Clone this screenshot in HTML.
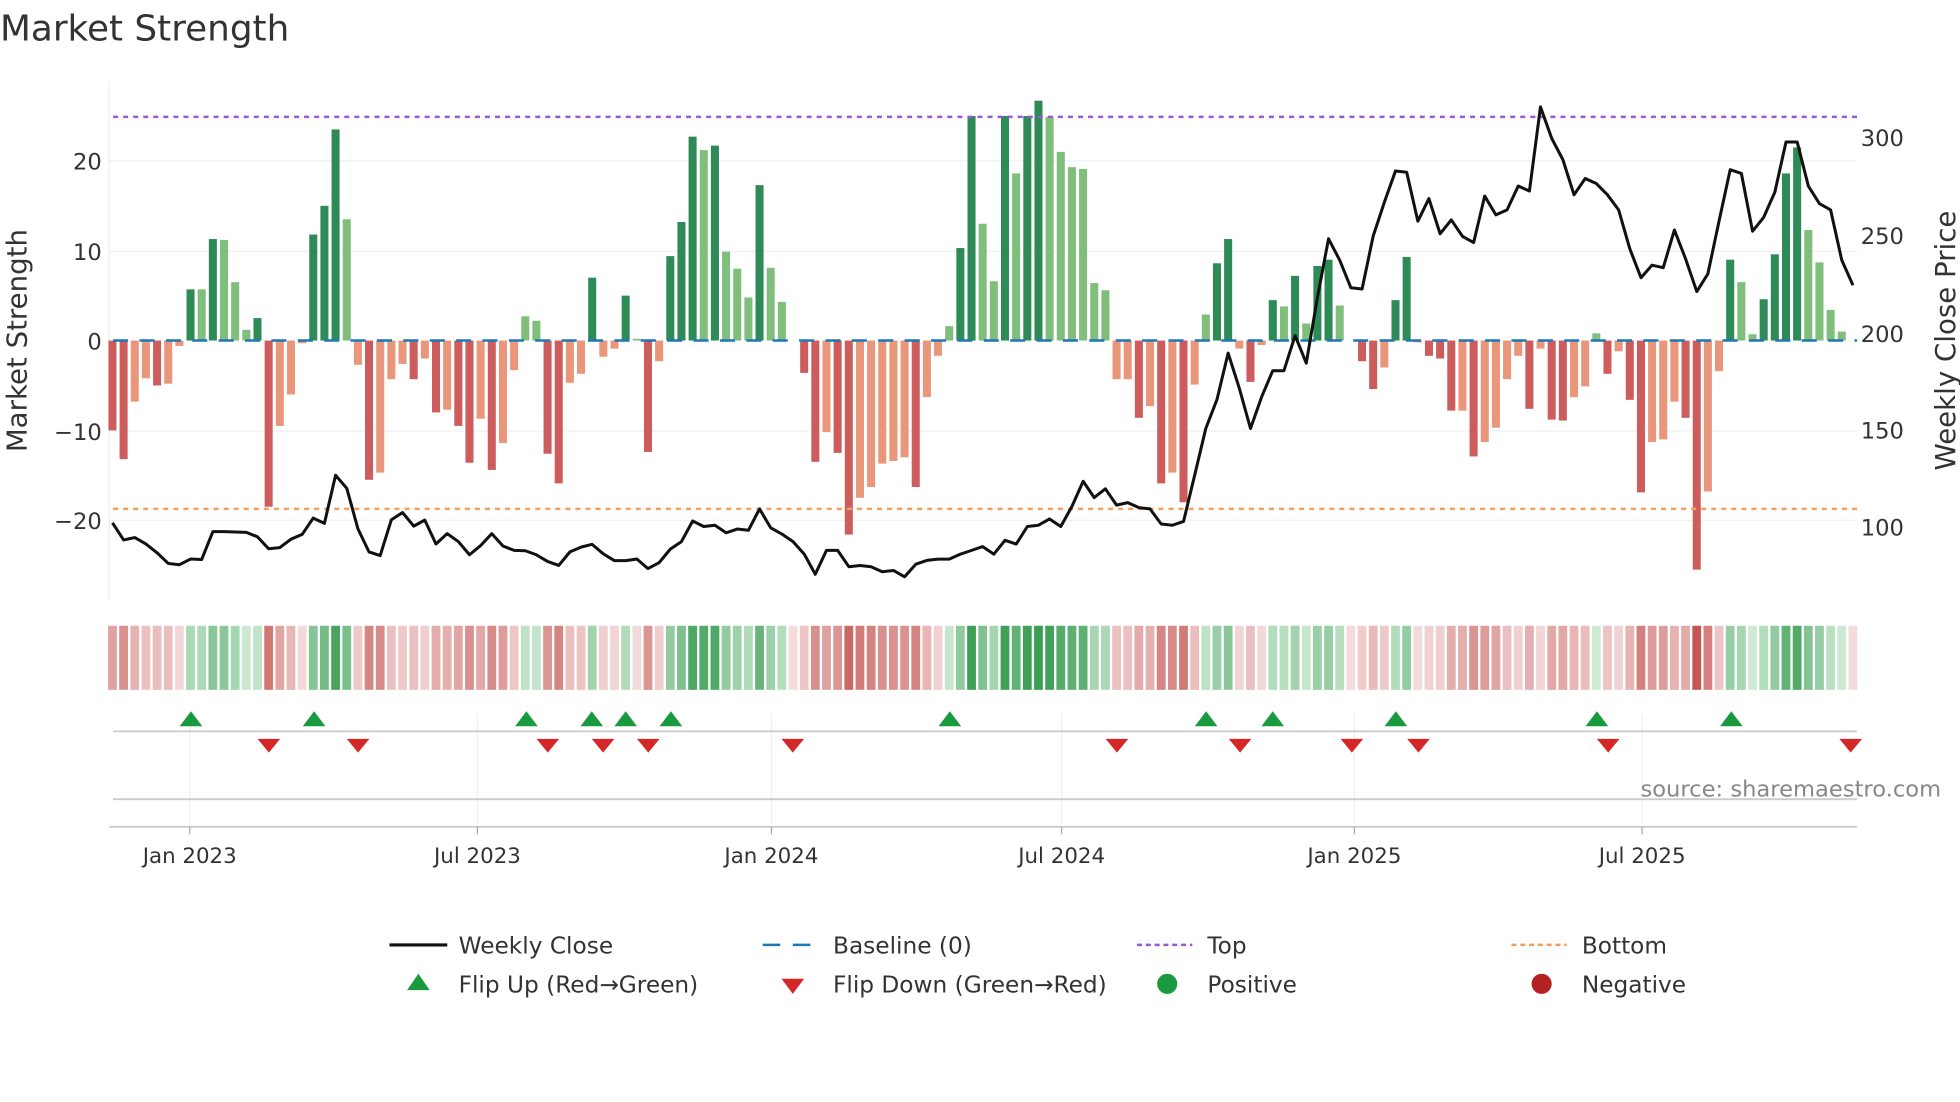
<!DOCTYPE html>
<html><head><meta charset="utf-8"><style>
html,body{margin:0;padding:0;background:#fff;width:1960px;height:1102px;overflow:hidden}
svg{display:block}
text{font-family:"DejaVu Sans","Liberation Sans",sans-serif;fill:#333}
</style></head><body>
<svg id="s" width="1960" height="1102" viewBox="0 0 1560 877" xmlns="http://www.w3.org/2000/svg">
<text x="0" y="32" font-size="28.5">Market Strength</text>
<g stroke="#eef0f5" stroke-width="1">
<line x1="87" x2="1478" y1="128" y2="128"/><line x1="87" x2="1478" y1="200" y2="200"/>
<line x1="87" x2="1478" y1="343" y2="343"/><line x1="87" x2="1478" y1="414" y2="414"/>
<line x1="87" x2="87" y1="65" y2="478"/>
</g>
<g id="bars"></g>
<line x1="90" x2="1478" y1="271" y2="271" stroke="#1f77b4" stroke-width="2" stroke-dasharray="12,9"/>
<line x1="90" x2="1478" y1="93" y2="93" stroke="#9b59d6" stroke-width="2" stroke-dasharray="4,4"/>
<line x1="90" x2="1478" y1="405" y2="405" stroke="#f0a060" stroke-width="2" stroke-dasharray="4,4"/>
<polyline id="price" fill="none" stroke="#111" stroke-width="2.4" stroke-linejoin="round"/>
<g font-size="18" text-anchor="end">
<text x="81" y="135">20</text><text x="81" y="207">10</text><text x="81" y="278">0</text>
<text x="81" y="350">−10</text><text x="81" y="421">−20</text>
</g>
<g font-size="18">
<text x="1481" y="116">300</text><text x="1481" y="194">250</text><text x="1481" y="272">200</text>
<text x="1481" y="349">150</text><text x="1481" y="426">100</text>
</g>
<text font-size="22" text-anchor="middle" transform="translate(21,271) rotate(-90)">Market Strength</text>
<text font-size="22" text-anchor="middle" transform="translate(1556,271) rotate(-90)">Weekly Close Price</text>
<g id="heat"></g>
<g stroke="#eef0f5"><line x1="151" x2="151" y1="568" y2="656"/><line x1="380" x2="380" y1="568" y2="656"/><line x1="614" x2="614" y1="568" y2="656"/><line x1="845" x2="845" y1="568" y2="656"/><line x1="1078" x2="1078" y1="568" y2="656"/><line x1="1307" x2="1307" y1="568" y2="656"/></g>
<line x1="90" x2="1478" y1="582" y2="582" stroke="#ccc" stroke-width="1.5"/>
<line x1="90" x2="1478" y1="636" y2="636" stroke="#ccc" stroke-width="1.5"/>
<line x1="87" x2="1478" y1="658" y2="658" stroke="#ccc" stroke-width="1.5"/>
<g stroke="#aaa"><line x1="151" x2="151" y1="658" y2="664"/><line x1="380" x2="380" y1="658" y2="664"/><line x1="614" x2="614" y1="658" y2="664"/><line x1="845" x2="845" y1="658" y2="664"/><line x1="1078" x2="1078" y1="658" y2="664"/><line x1="1307" x2="1307" y1="658" y2="664"/></g>
<g id="flips"></g>
<text x="1545" y="634" font-size="18" text-anchor="end" style="fill:#888">source: sharemaestro.com</text>
<g font-size="17" text-anchor="middle">
<text x="151" y="687">Jan 2023</text><text x="380" y="687">Jul 2023</text><text x="614" y="687">Jan 2024</text>
<text x="845" y="687">Jul 2024</text><text x="1078" y="687">Jan 2025</text><text x="1307" y="687">Jul 2025</text>
</g>
<g font-size="18.5">
<line x1="310" x2="356" y1="752" y2="752" stroke="#111" stroke-width="2.5"/><text x="365" y="759">Weekly Close</text>
<line x1="607" x2="651" y1="752" y2="752" stroke="#1f77b4" stroke-width="2" stroke-dasharray="14,10"/><text x="663" y="759">Baseline (0)</text>
<line x1="905" x2="949" y1="752" y2="752" stroke="#9b59d6" stroke-width="2" stroke-dasharray="4,3"/><text x="961" y="759">Top</text>
<line x1="1203" x2="1247" y1="752" y2="752" stroke="#f0a060" stroke-width="2" stroke-dasharray="4,3"/><text x="1259" y="759">Bottom</text>
<polygon points="324,788 342,788 333,775" fill="#1a9a3e"/><text x="365" y="790">Flip Up (Red→Green)</text>
<polygon points="622,779 640,779 631,791" fill="#d62728"/><text x="663" y="790">Flip Down (Green→Red)</text>
<circle cx="929" cy="783" r="8" fill="#1a9a3e"/><text x="961" y="790">Positive</text>
<circle cx="1227" cy="783" r="8" fill="#b22222"/><text x="1259" y="790">Negative</text>
</g>
</svg>
<script>
var V=[-10,-13.2,-6.8,-4.2,-5,-4.8,-0.6,5.7,5.7,11.3,11.2,6.5,1.2,2.5,-18.5,-9.5,-6,-0.3,11.8,15,23.5,13.5,-2.7,-15.5,-14.7,-4.3,-2.6,-4.3,-2,-8,-7.7,-9.5,-13.6,-8.7,-14.4,-11.4,-3.3,2.7,2.2,-12.6,-15.9,-4.7,-3.7,7,-1.8,-0.9,5,0.2,-12.4,-2.3,9.4,13.2,22.7,
21.2,21.7,9.9,8,4.8,17.3,8.1,4.3,0,-3.6,-13.5,-10.2,-12.5,-21.6,-17.5,-16.3,-13.7,-13.4,-13,-16.3,-6.3,-1.7,1.6,10.3,25,13,6.6,25,18.6,25,26.7,24.9,21,19.3,19.1,6.4,5.6,
-4.3,-4.3,-8.6,-7.3,-15.9,-14.7,-18,-4.9,2.9,8.6,11.3,-0.9,-4.6,-0.5,4.5,3.8,7.2,1.9,8.3,9,3.9,0,-2.3,-5.4,-3,4.5,9.3,-0.2,-1.7,-2,-7.8,-7.8,-12.9,-11.3,-9.7,-4.3,-1.7,-7.6,-0.9,-8.8,-8.9,-6.3,-5.1,0.8,-3.7,-1.2,-6.6,-16.9,-11.3,-11,-6.8,-8.6,-25.5,-16.8,-3.4,9,6.5,0.7,4.6,9.6,18.6,21.5,12.3,8.7,3.4,1,0];
var Z=[1315,1358,1352,1368,1390,1417,1420,1406,1407,1337,1337,1338,1339,1350,1380,1377,1356,1344,1303,1316,1195,1228,1330,1388,1397,1307,1289,1323,1308,1368,1342,1362,1395,1372,1342,1373,1384,1385,1395,1412,1422,1388,1376,1369,1393,1410,1410,1406,1430,1415,1381,1362,1310];
var P=Z.map(function(z){return z/3.16});
P=P.concat([419,418,424,421,422,405,420,425,431,441,457,438,438,451,450,451,455,454,459,449,446,445,445,441,438,435,441,430,433,419,418,413,419,403,383,396,389,402,400,404,405,417,418,415,378,341,318,281,309,341,316,295,295,267,289,237,190,207,229,230,188,161,136,137,176,158,186,175,188,193,156,171,167,148,152,85,110,127,155,142,146,155,167,198,221,211,213,183,206,232,218,176,135,138,184,173,153,113,113,148,162,167,207,227]);
var NS="http://www.w3.org/2000/svg";
function el(t,a,p){var e=document.createElementNS(NS,t);for(var k in a)e.setAttribute(k,a[k]);p.appendChild(e);return e;}
var bars=document.getElementById('bars'),heat=document.getElementById('heat'),fl=document.getElementById('flips');
function mix(a,b,t){var r=[];for(var i=0;i<3;i++)r.push(Math.round(a[i]+(b[i]-a[i])*t));return 'rgb('+r.join(',')+')';}
for(var i=0;i<V.length;i++){
 var v=V[i],x=89.5+8.88*i,prev=i?V[i-1]:0,dark=Math.abs(v)>Math.abs(prev);
 var c=v>=0?(dark?'#2e8b57':'#7fbf7b'):(dark?'#cd5c5c':'#e9967a');
 var y=271-v*7.15;
 if(Math.abs(v)>0.05)el('rect',{x:x-3.2,y:Math.min(y,271),width:6.4,height:Math.abs(y-271),fill:c},bars);
 var t=Math.min(Math.abs(v)/26,1);
 var hc=v>0.3?mix([214,238,218],[58,158,84],Math.pow(t,0.85)):mix([244,220,220],[196,84,80],Math.pow(t,0.9));
 el('rect',{x:x-3.5,y:498,width:7,height:51,fill:hc},heat);
}
var pts=[];for(var i=0;i<P.length;i++)pts.push((89.5+8.88*i).toFixed(1)+','+P[i].toFixed(1));
document.getElementById('price').setAttribute('points',pts.join(' '));
[152,250,419,471,498,534,756,960,1013,1111,1271,1378].forEach(function(x){el('polygon',{points:(x-9)+',578 '+(x+9)+',578 '+x+',566',fill:'#1a9a3e'},fl);});
[214,285,436,480,516,631,889,987,1076,1129,1280,1473].forEach(function(x){el('polygon',{points:(x-9)+',588 '+(x+9)+',588 '+x+',599',fill:'#d62728'},fl);});
</script>
</body></html>
